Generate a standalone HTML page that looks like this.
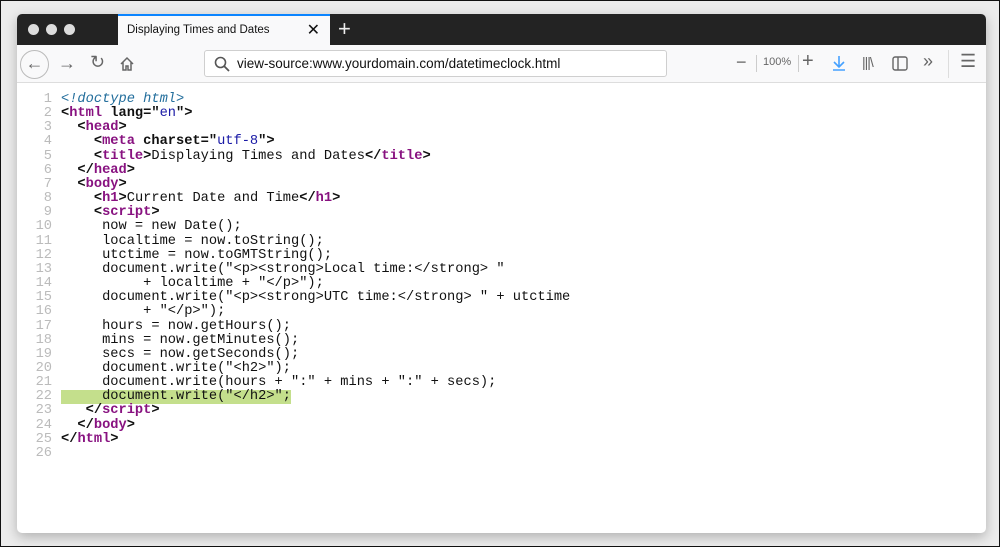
<!DOCTYPE html>
<html><head><style>
*{margin:0;padding:0;box-sizing:border-box}
body{width:1000px;height:547px;background:#ececec;border:1px solid #111;position:relative;overflow:hidden;font-family:"Liberation Sans",sans-serif}
.win{position:absolute;left:16px;top:13px;width:969px;height:519px;background:#fff;border-radius:5px;box-shadow:0 4px 12px rgba(0,0,0,.25);overflow:hidden}
.tabs{position:absolute;left:0;top:0;width:100%;height:31px;background:#232323}
.dot{position:absolute;top:10px;width:11px;height:11px;border-radius:50%;background:#ddd}
.tab{position:absolute;left:101px;top:0;width:212px;height:31px;background:#f9f9fa;border-top:2px solid #0a84ff;font-size:11.5px;color:#111;padding:8px 0 0 9px}
.tb{position:absolute;left:0;top:31px;width:100%;height:38px;background:#f9f9fa;border-bottom:1px solid #ddd}
.url{position:absolute;left:187px;top:5px;width:463px;height:27px;border:1px solid #cfcfcf;border-radius:3px;background:#fff;font-size:13.5px;color:#111;padding:5px 0 0 32px}
.ic{position:absolute;color:#666}
.code{position:absolute;left:0;top:79px;width:900px;height:400px;font-family:"Liberation Mono",monospace;font-size:13.7px;line-height:14.16px;font-weight:bold;color:#111}
.ln,.c{white-space:pre}
.ln{position:absolute;top:0;left:0;width:35px;text-align:right;color:#bbb;font-weight:normal}
.c{position:absolute;top:0;left:44px}
.t{color:#881280}.v{color:#1a1aa6;font-weight:normal}.s{font-weight:normal}
.hl{position:absolute;left:44px;width:230px;height:14px;background:#c4df8c}
</style></head><body>
<div class="win">
<div class="tabs">
<div class="dot" style="left:11px"></div><div class="dot" style="left:29px"></div><div class="dot" style="left:47px"></div>
<div class="tab">Displaying Times and Dates<span style="position:absolute;right:10px;top:4px;font-size:16px">✕</span></div>
<div style="position:absolute;left:321px;top:2px;color:#eee;font-size:22px">+</div>
</div>
<div class="tb">
<div style="position:absolute;left:3px;top:5px;width:29px;height:29px;border:1px solid #bbb;border-radius:50%;color:#666;font-size:18px;text-align:center;line-height:25px">←</div>
<div class="ic" style="left:41px;top:8px;font-size:18px">→</div>
<div class="ic" style="left:73px;top:7px;font-size:18px">↻</div>
<svg style="position:absolute;left:102px;top:11px" width="16" height="16" viewBox="0 0 16 16"><path d="M2 8L8 2l6 6M4 6v8h3v-4h2v4h3V6" fill="none" stroke="#666" stroke-width="1.5"/></svg>
<div class="url"><svg style="position:absolute;left:9px;top:5px" width="16" height="16" viewBox="0 0 16 16"><circle cx="6.5" cy="6.5" r="5" fill="none" stroke="#555" stroke-width="1.6"/><path d="M10 10l5 5" stroke="#555" stroke-width="1.8"/></svg>view-source:www.yourdomain.com/datetimeclock.html</div>
<div class="ic" style="left:719px;top:7px;font-size:18px">−</div>
<div style="position:absolute;left:739px;top:10px;width:1px;height:17px;background:#ccc"></div>
<div class="ic" style="left:746px;top:11px;font-size:11px">100%</div>
<div style="position:absolute;left:781px;top:10px;width:1px;height:17px;background:#ccc"></div>
<div class="ic" style="left:785px;top:5px;font-size:20px">+</div>
<svg style="position:absolute;left:814px;top:10px" width="16" height="17" viewBox="0 0 16 17"><path d="M8 1v11M3 7l5 5 5-5M2 15h12" fill="none" stroke="#45a1ff" stroke-width="1.6"/></svg>
<div class="ic" style="left:845px;top:9px;font-size:14px;letter-spacing:-1px">|||\</div>
<svg style="position:absolute;left:875px;top:11px" width="16" height="15" viewBox="0 0 16 15"><rect x="1" y="1" width="14" height="13" rx="2" fill="none" stroke="#666" stroke-width="1.4"/><path d="M6 1v13" stroke="#666" stroke-width="1.4"/></svg>
<div class="ic" style="left:906px;top:6px;font-size:18px">»</div>
<div style="position:absolute;left:931px;top:5px;width:1px;height:28px;background:#ddd"></div>
<div class="ic" style="left:943px;top:6px;font-size:18px">☰</div>
</div>
<div class="code"><div class="hl" style="top:297.4px"></div><div class="ln">1
2
3
4
5
6
7
8
9
10
11
12
13
14
15
16
17
18
19
20
21
22
23
24
25
26</div><div class="c"><span style="color:#236e9c;font-style:italic;font-weight:normal">&lt;!doctype html&gt;</span>
&lt;<span class="t">html</span> lang="<span class="v">en</span>"&gt;
  &lt;<span class="t">head</span>&gt;
    &lt;<span class="t">meta</span> charset="<span class="v">utf-8</span>"&gt;
    &lt;<span class="t">title</span>&gt;<span class="s">Displaying Times and Dates</span>&lt;/<span class="t">title</span>&gt;
  &lt;/<span class="t">head</span>&gt;
  &lt;<span class="t">body</span>&gt;
    &lt;<span class="t">h1</span>&gt;<span class="s">Current Date and Time</span>&lt;/<span class="t">h1</span>&gt;
    &lt;<span class="t">script</span>&gt;<span class="s">
     now = new Date();
     localtime = now.toString();
     utctime = now.toGMTString();
     document.write("&lt;p&gt;&lt;strong&gt;Local time:&lt;/strong&gt; "
          + localtime + "&lt;/p&gt;");
     document.write("&lt;p&gt;&lt;strong&gt;UTC time:&lt;/strong&gt; " + utctime
          + "&lt;/p&gt;");
     hours = now.getHours();
     mins = now.getMinutes();
     secs = now.getSeconds();
     document.write("&lt;h2&gt;");
     document.write(hours + ":" + mins + ":" + secs);
     document.write("&lt;/h2&gt;";</span>
   &lt;/<span class="t">script</span>&gt;
  &lt;/<span class="t">body</span>&gt;
&lt;/<span class="t">html</span>&gt;</div></div>
</div>
</body></html>
